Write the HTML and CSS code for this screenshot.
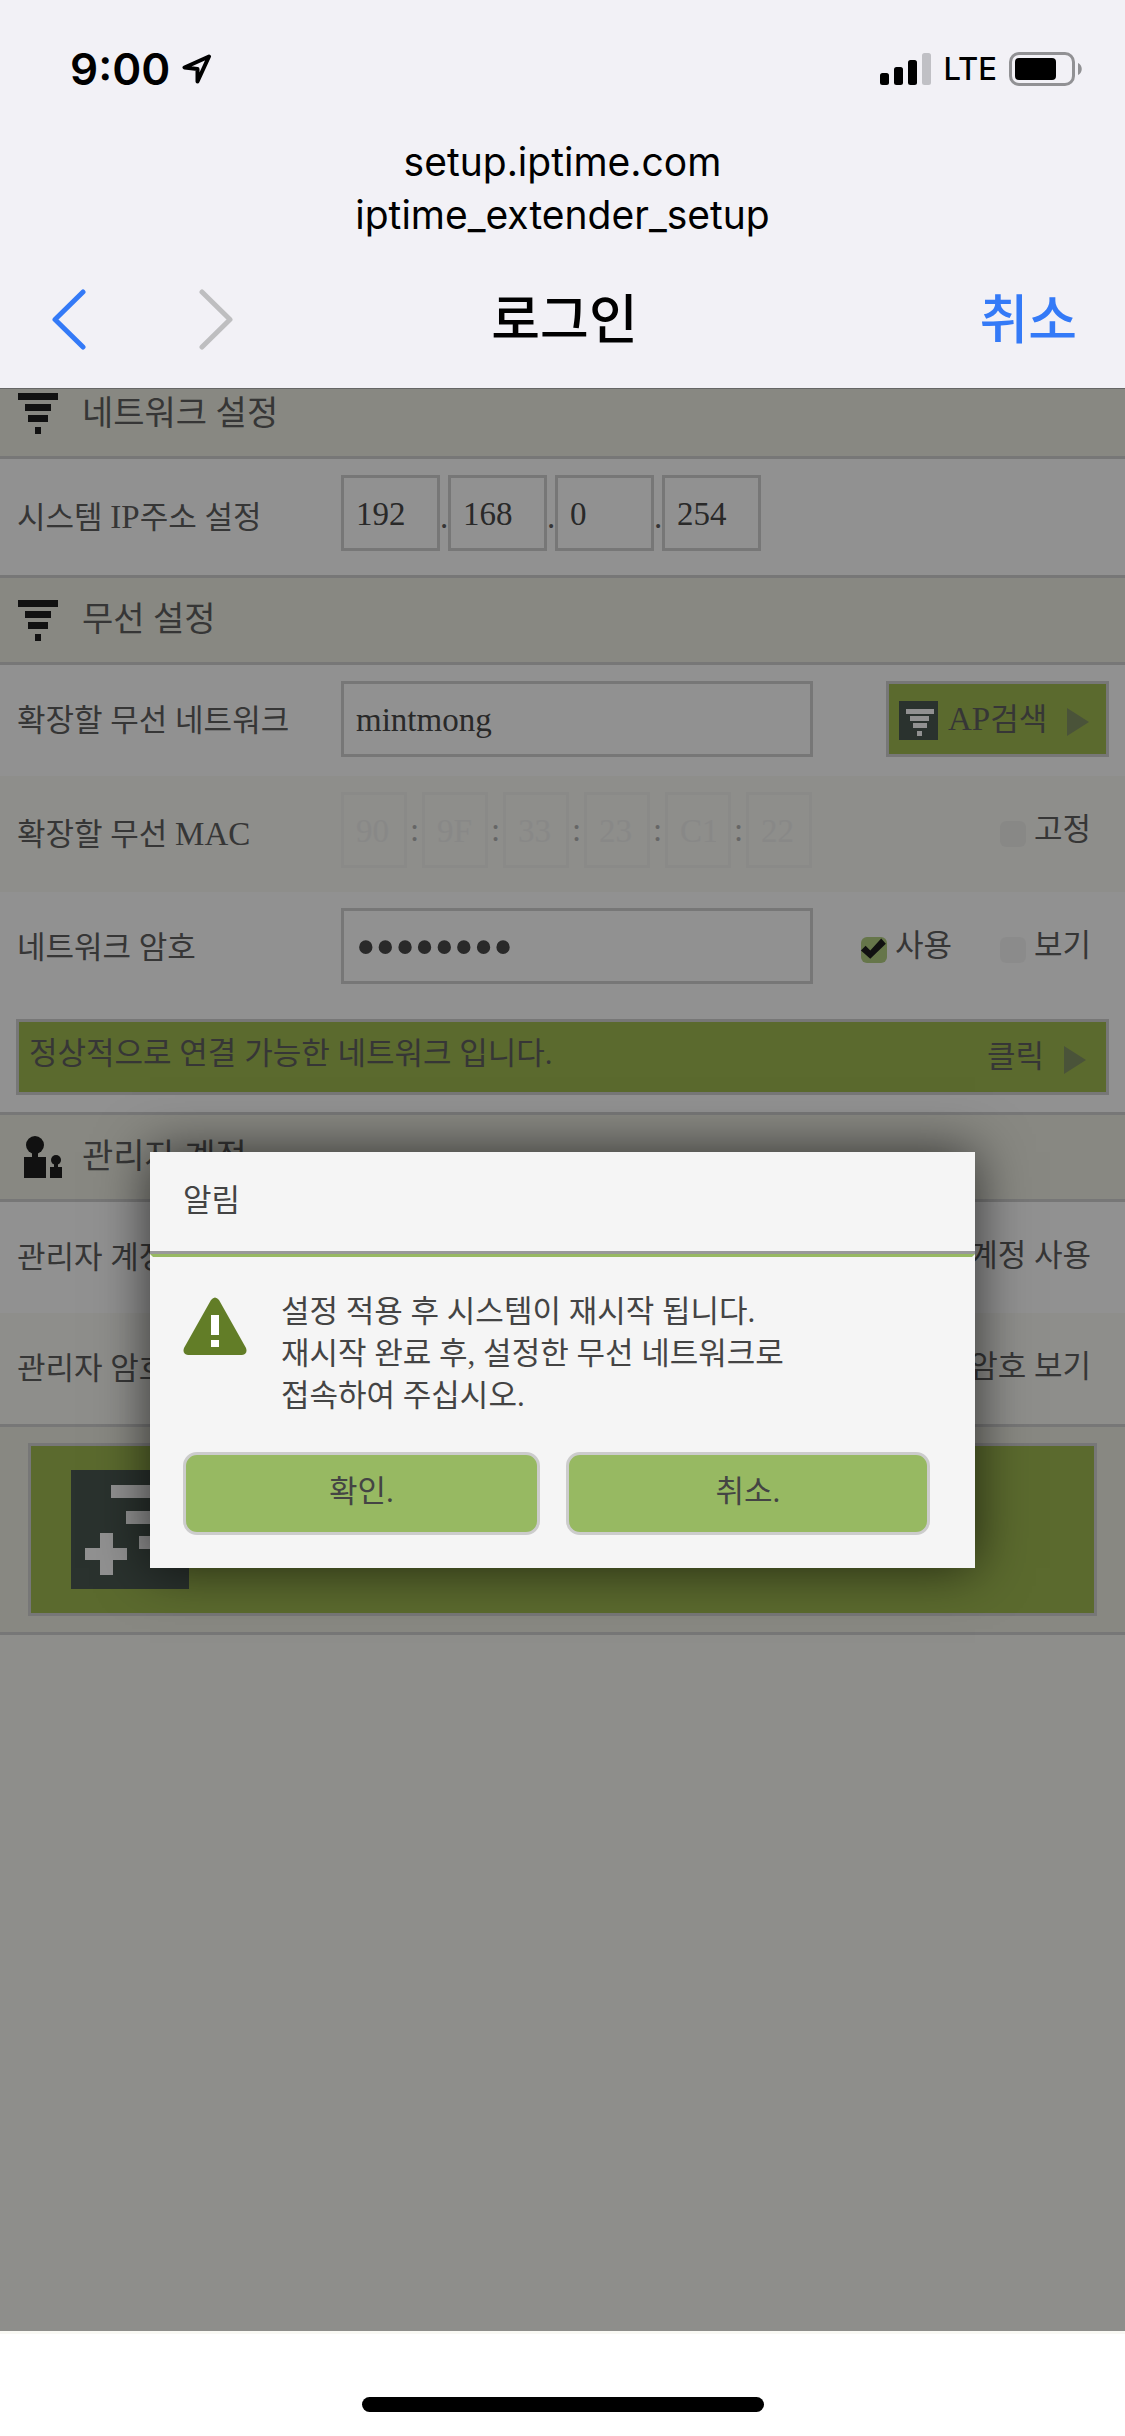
FILE: index.html
```html
<!DOCTYPE html>
<html lang="ko">
<head>
<meta charset="utf-8">
<meta name="viewport" content="width=device-width, initial-scale=1">
<title>로그인</title>
<link rel="stylesheet" href="styles.css">
</head>
<body>
<svg class="defs" aria-hidden="true">
  <symbol id="wifi" viewBox="0 0 40 41">
    <path d="M0 0h40v7H0zM7 11h26v7H7zM10 22h20v7H10zM17 34h6v7h-6z"/>
  </symbol>
</svg>

<header class="browser">
  <div class="status">
    <div class="status-left">
      <span class="clock">9:00</span>
      <svg class="location" viewBox="0 0 30 30" aria-hidden="true"><path d="M27 2.500L2.500 13.500 15.500 15v12.500z" /></svg>
    </div>
    <div class="status-right">
      <svg class="signal" viewBox="0 0 51 32" aria-hidden="true">
        <rect x="0" y="20" width="9" height="12" rx="2.500"/>
        <rect x="14" y="14" width="9" height="18" rx="2.500"/>
        <rect x="28" y="7" width="9" height="25" rx="2.500"/>
        <rect x="42" y="0" width="9" height="32" rx="2.500" fill="#c0c0c5"/>
      </svg>
      <span class="carrier">LTE</span>
      <svg class="battery" viewBox="0 0 74 34" aria-hidden="true">
        <rect x="1.500" y="1.500" width="63" height="31" rx="8.500" fill="none" stroke="#919194" stroke-width="3"/>
        <rect x="6" y="6" width="41" height="22" rx="4"/>
        <path d="M69 11c5 2 5 10 0 12z" fill="#919194"/>
      </svg>
    </div>
  </div>
  <div class="address">
    <div>setup.iptime.com</div>
    <div>iptime_extender_setup</div>
  </div>
  <nav class="toolbar">
    <div class="history">
      <button class="nav-button" type="button" aria-label="뒤로"><svg viewBox="0 0 34 61" aria-hidden="true"><path d="M31 3L3 30.500 31 58"/></svg></button>
      <button class="nav-button forward" type="button" aria-label="앞으로" disabled><svg viewBox="0 0 34 61" aria-hidden="true"><path d="M3 3l28 27.500L3 58"/></svg></button>
    </div>
    <h1 class="page-title">로그인</h1>
    <button class="cancel" type="button">취소</button>
  </nav>
</header>

<main class="content">
  <form class="settings">
    <h2 class="section clipped"><svg class="section-icon" aria-hidden="true"><use href="#wifi"/></svg>네트워크 설정</h2>
    <div class="row tall">
      <span class="label">시스템 <span class="latin">IP</span>주소 설정</span>
      <div class="fields">
        <input class="box octet" aria-label="IP 1" value="192"><span class="dot">.</span>
        <input class="box octet" aria-label="IP 2" value="168"><span class="dot">.</span>
        <input class="box octet" aria-label="IP 3" value="0"><span class="dot">.</span>
        <input class="box octet" aria-label="IP 4" value="254">
      </div>
    </div>

    <h2 class="section ruled"><svg class="section-icon" aria-hidden="true"><use href="#wifi"/></svg>무선 설정</h2>
    <div class="row">
      <label class="label" for="ssid">확장할 무선 네트워크</label>
      <div class="fields"><input class="box wide" id="ssid" value="mintmong"></div>
      <div class="extras">
        <button class="green search" type="button">
          <svg class="search-icon" viewBox="0 0 39 39" aria-hidden="true"><path class="tile" d="M0 0h39v39H0z"/><path d="M7 8h28v5H7zM11 15h19v5H11zM14 22h14v5H14zM18 30h5v5h-5z"/></svg>
          <span><span class="latin">AP</span>검색</span>
          <svg class="arrow" viewBox="0 0 22 28" aria-hidden="true"><path d="M0 0l22 14L0 28z"/></svg>
        </button>
      </div>
    </div>
    <div class="row tall alt">
      <span class="label">확장할 무선 <span class="latin">MAC</span></span>
      <div class="fields">
        <input class="box mac" aria-label="MAC 1" value="90" disabled><span class="colon">:</span>
        <input class="box mac" aria-label="MAC 2" value="9F" disabled><span class="colon">:</span>
        <input class="box mac" aria-label="MAC 3" value="33" disabled><span class="colon">:</span>
        <input class="box mac" aria-label="MAC 4" value="23" disabled><span class="colon">:</span>
        <input class="box mac" aria-label="MAC 5" value="C1" disabled><span class="colon">:</span>
        <input class="box mac" aria-label="MAC 6" value="22" disabled>
      </div>
      <div class="extras"><label class="tick"><input type="checkbox">고정</label></div>
    </div>
    <div class="row">
      <label class="label" for="key">네트워크 암호</label>
      <div class="fields"><input class="box wide secret" id="key" type="password" value="password"></div>
      <div class="extras">
        <label class="tick"><input type="checkbox" checked>사용</label>
        <label class="tick"><input type="checkbox">보기</label>
      </div>
    </div>
    <div class="notice-row">
      <button class="green notice" type="button">
        <span class="notice-text">정상적으로 연결 가능한 네트워크 입니다.</span>
        <span>클릭</span>
        <svg class="arrow" viewBox="0 0 22 28" aria-hidden="true"><path d="M0 0l22 14L0 28z"/></svg>
      </button>
    </div>

    <h2 class="section ruled"><svg class="section-icon people" viewBox="0 0 44 42" aria-hidden="true"><circle cx="17" cy="9" r="9"/><path d="M14 16h6v5h8v21H6V21h8z"/><circle cx="38" cy="24" r="5"/><path d="M36 28h4v3h4v11H32V31h4z"/></svg>관리자 계정</h2>
    <div class="row">
      <span class="label">관리자 계정</span>
      <div class="extras"><label class="tick"><input type="checkbox">계정 사용</label></div>
    </div>
    <div class="row alt">
      <span class="label">관리자 암호</span>
      <div class="extras"><label class="tick"><input type="checkbox">암호 보기</label></div>
    </div>
    <div class="submit-row">
      <button class="green submit" type="button" aria-label="적용">
        <svg class="submit-icon" viewBox="0 0 118 119" aria-hidden="true"><path class="tile" d="M0 0h118v119H0z"/><path d="M40 15h64v13H40zM55 41h36v13H55zM68 66h16v13H68zM29 63h13v15h14v12H42v15H29V90H14V78h15z"/></svg>
      </button>
    </div>
  </form>

  <div class="backdrop">
    <section class="dialog" role="dialog" aria-labelledby="dialog-title">
      <h2 class="dialog-title" id="dialog-title">알림</h2>
      <div class="dialog-body">
        <div class="message">
          <svg class="warning" viewBox="0 0 64 58" aria-hidden="true"><path fill="#627d27" d="M28 3q4-5 8 0l27 48q2 6-4 7H5q-6-1-4-7z"/><path fill="#fff" d="M28 18h8v20h-8zM28 43h8v7h-8z"/></svg>
          <p>설정 적용 후 시스템이 재시작 됩니다.<br>재시작 완료 후, 설정한 무선 네트워크로<br>접속하여 주십시오.</p>
        </div>
        <div class="actions">
          <button type="button">확인.</button>
          <button type="button">취소.</button>
        </div>
      </div>
    </section>
  </div>
</main>

<footer class="home"><div class="home-bar"></div></footer>
</body>
</html>
```

FILE: styles.css
```css
* { box-sizing: border-box; }

body {
  margin: 0;
  min-height: 100vh;
  display: flex;
  flex-direction: column;
  background: #f9f9f5;
  color: #606060;
  font-family: "Liberation Serif", "Noto Sans CJK KR", serif;
  font-size: 31px;
  line-height: 42px;
}

button, input { font: inherit; color: inherit; margin: 0; }
button { padding: 0; border: 0; background: none; }
h1, h2, p { margin: 0; font-weight: 400; }
svg { display: block; flex: none; }
.defs { position: absolute; width: 0; height: 0; }
.latin { font-size: 33px; }

/* Browser chrome */
.browser {
  background: #f2f1f6;
  color: #000;
  border-bottom: 1px solid #666;
  font-family: Inter, "Noto Sans CJK KR", sans-serif;
}
.status {
  display: flex;
  justify-content: space-between;
  align-items: center;
  height: 135px;
  padding: 3px 42px 0 70px;
}
.status-left, .status-right { display: flex; align-items: center; }
.status-left { gap: 12px; }
.status-right { gap: 12px; }
.clock { font-size: 44px; font-weight: 600; }
.location { width: 30px; height: 30px; fill: none; stroke: #000; stroke-width: 4; stroke-linejoin: round; }
.signal { width: 51px; height: 32px; }
.carrier { font-size: 31px; font-weight: 500; }
.battery { width: 74px; height: 34px; }
.address { text-align: center; font-size: 39px; line-height: 53px; }
.toolbar {
  display: grid;
  grid-template-columns: 1fr auto 1fr;
  align-items: center;
  height: 147px;
  padding: 10px 48px 0 52px;
}
.history { display: flex; gap: 113px; }
.nav-button svg { width: 34px; height: 61px; fill: none; stroke: #347af7; stroke-width: 5; stroke-linecap: round; stroke-linejoin: round; }
.forward svg { stroke: #bebec0; }
.page-title { font-size: 53px; font-weight: 500; line-height: 60px; }
.cancel { justify-self: end; color: #347af7; font-size: 53px; font-weight: 500; line-height: 60px; }

/* Settings page */
.content { position: relative; flex: 1; }
.section {
  display: flex;
  align-items: center;
  gap: 24px;
  height: 87px;
  padding-left: 18px;
  background: #eff0e4;
  border-bottom: 3px solid #d2d2d2;
  font-size: 34px;
}
.section.clipped { height: 70px; padding-bottom: 18px; }
.section.ruled { height: 90px; border-top: 3px solid #d2d2d2; }
.section-icon { width: 40px; height: 41px; fill: #1e1e1e; }
.people { width: 44px; height: 42px; margin-right: -4px; }

.row {
  display: grid;
  grid-template-columns: 324px 472px 1fr;
  align-items: start;
  min-height: 111px;
  padding: 16px 16px 16px 17px;
  background: #fff;
}
.row.tall { min-height: 116px; }
.row.alt { background: #f9f9f5; }
.label { align-self: center; white-space: nowrap; }
.fields { display: flex; align-items: center; }
.extras {
  grid-column: 3;
  display: flex;
  justify-content: flex-end;
  align-items: center;
  gap: 48px;
  min-height: 76px;
}

.box {
  height: 76px;
  padding: 2px 12px 0;
  border: 3px solid #d2d2d2;
  border-radius: 0;
  background: transparent;
  color: #484848;
  font-size: 33px;
}
.octet { width: 99px; }
.dot { width: 8px; padding-top: 8px; font-size: 33px; }
.wide { width: 100%; }
.secret { font-size: 56px; }
.mac { width: 66px; border-color: #f2f2ef; color: #f0f0ed; }
.colon { width: 15px; text-align: center; color: #b4b4b4; font-size: 33px; }

.tick { display: flex; align-items: center; gap: 8px; margin-right: 18px; white-space: nowrap; }
.tick + .tick { margin-left: -18px; }
.tick input {
  appearance: none;
  width: 26px;
  height: 26px;
  margin-top: 8px;
  border-radius: 6px;
  background: rgba(0, 0, 0, 0.04);
}
.tick input:checked { background: #b3cf82; }
.tick input:checked::after {
  content: "";
  display: block;
  width: 26px;
  height: 26px;
  background: #1e1e1e;
  clip-path: polygon(0 52%, 18% 34%, 36% 52%, 78% 6%, 96% 26%, 36% 84%);
}

.green {
  display: flex;
  align-items: center;
  background: #a1ba52;
  border: 3px solid #d2d2d2;
}
.tile { fill: #4a5951; }
.search-icon, .submit-icon { fill: #fff; }
.arrow { width: 22px; height: 28px; margin-top: 5px; fill: #839364; }
.search { width: 223px; height: 76px; padding-left: 10px; gap: 10px; }
.search-icon { width: 39px; height: 39px; margin-top: 2px; }
.search .arrow { margin-left: 10px; }
.notice-row { padding: 16px 16px 17px; background: #fff; }
.notice { width: 100%; height: 76px; padding: 0 20px 0 10px; gap: 20px; text-align: left; }
.notice-text { flex: 1; padding-bottom: 6px; }
.submit-row { padding: 16px 28px; background: #eff0e4; border: solid #d2d2d2; border-width: 3px 0; }
.submit { width: 100%; height: 173px; padding-left: 40px; }
.submit-icon { width: 118px; height: 119px; }

/* Dialog over the dimmed page */
.backdrop {
  position: absolute;
  inset: 0;
  padding: 763px 150px 0;
  background: rgba(0, 0, 0, 0.43);
}
.dialog { background: #f5f5f5; color: #444; box-shadow: 0 0 50px rgba(0, 0, 0, 0.65); }
.dialog-title {
  height: 102px;
  padding: 28px 33px;
  border-bottom: 3px solid #999;
  font-size: 31px;
}
.dialog-body {
  padding: 34px 42px 30px 30px;
  border: 3px solid #f5f5f5;
  border-top-color: #97b962;
}
.message { display: flex; gap: 34px; padding-bottom: 35px; }
.warning { width: 64px; height: 58px; margin-top: 6px; }
.actions { display: grid; grid-template-columns: 49fr 50fr; gap: 26px; }
.actions button {
  height: 83px;
  padding-bottom: 4px;
  border: 3px solid #ccc;
  border-radius: 14px;
  background: #97b962;
}

/* Home indicator */
.home {
  height: 105px;
  padding-top: 63px;
  border-top: 3px solid #f9f9f4;
  background: #fff;
}
.home-bar { width: 402px; height: 15px; margin: 0 auto; border-radius: 8px; background: #000; }
```
